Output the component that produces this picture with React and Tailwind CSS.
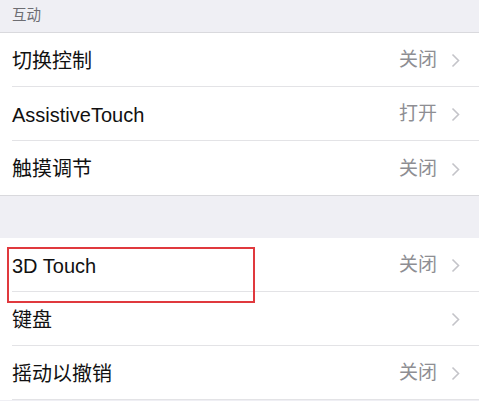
import React from "react";

const font = { fontFamily: '"Liberation Sans", "Noto Sans CJK SC", sans-serif' };

const Chevron = () => (
  <svg width="9" height="15" viewBox="0 0 9 15" className="ml-[14px]">
    <path d="M1.5 1.5 L7.5 7.5 L1.5 13.5" fill="none" stroke="#c4c4c9" strokeWidth="1.6" />
  </svg>
);

const Row = ({ label, value, last }) => (
  <div className="flex h-[54px] items-center pl-3">
    <div
      className={
        "flex h-full flex-1 items-center pt-[2px] pr-[19px] " +
        (last ? "" : "border-b border-[#e3e3e6]")
      }
    >
      <span className="flex-1 text-[20px] text-[#111]">{label}</span>
      {value && <span className="text-[19px] text-[#8e8e93]">{value}</span>}
      <Chevron />
    </div>
  </div>
);

const first = [
  { label: "切换控制", value: "关闭" },
  { label: "AssistiveTouch", value: "打开" },
  { label: "触摸调节", value: "关闭" },
];

const second = [
  { label: "3D Touch", value: "关闭" },
  { label: "键盘", value: "" },
  { label: "摇动以撤销", value: "关闭" },
];

export default function App() {
  return (
    <div className="h-[401px] w-[479px] overflow-hidden bg-[#efeff4]" style={font}>
      <div className="flex h-[33px] items-center border-b border-[#d9d9dd] pl-3 text-[14.5px] text-[#6d6d72]">
        互动
      </div>
      <div className="border-b border-[#d9d9dd] bg-white">
        {first.map((r, i) => (
          <Row key={r.label} {...r} last={i === first.length - 1} />
        ))}
      </div>
      <div className="h-[42px]" />
      <div className="relative bg-white">
        {second.map((r) => (
          <Row key={r.label} {...r} />
        ))}
        <div className="pointer-events-none absolute left-[7px] top-[9px] h-[56px] w-[248px] border-2 border-[#e0393e]" />
      </div>
    </div>
  );
}
